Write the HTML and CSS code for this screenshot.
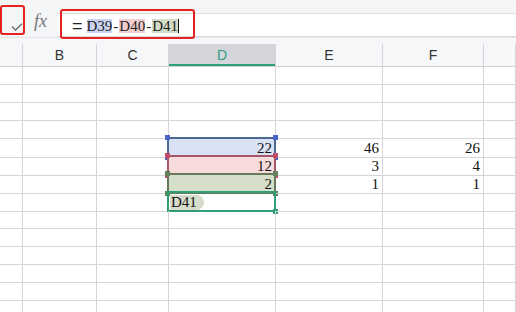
FILE: index.html
```html
<!DOCTYPE html>
<html lang="en">
<head>
    <meta charset="UTF-8">
    <title>Formula</title>
    <link rel="stylesheet" href="styles.css">
</head>
<body>
    <div class="sheet">
        <div class="toolbar">
            <div class="tools">
                <span class="confirm">
                    <svg width="12" height="8" viewBox="0 0 12 8"><polyline points="1,3.5 4.5,7 11,0.8" fill="none" stroke="#6b6b6b" stroke-width="1.3"/></svg>
                </span>
                <span class="fx">fx</span>
            </div>
            <div class="formula">
                <span class="eq">=</span><span class="tok t-blue">D39</span><span class="op">-</span><span class="tok t-pink">D40</span><span class="op">-</span><span class="tok t-green">D41</span><span class="caret"></span>
            </div>
            <div class="mark mark-check"></div>
            <div class="mark mark-formula"></div>
        </div>

        <div class="colhead">
            <div class="h"></div>
            <div class="h">B</div>
            <div class="h">C</div>
            <div class="h h-active">D</div>
            <div class="h">E</div>
            <div class="h">F</div>
            <div class="h"></div>
        </div>

        <div class="grid">
            <div class="row"><div class="c"></div><div class="c"></div><div class="c"></div><div class="c"></div><div class="c"></div><div class="c"></div><div class="c"></div></div>
            <div class="row"><div class="c"></div><div class="c"></div><div class="c"></div><div class="c"></div><div class="c"></div><div class="c"></div><div class="c"></div></div>
            <div class="row"><div class="c"></div><div class="c"></div><div class="c"></div><div class="c"></div><div class="c"></div><div class="c"></div><div class="c"></div></div>
            <div class="row"><div class="c"></div><div class="c"></div><div class="c"></div><div class="c"></div><div class="c"></div><div class="c"></div><div class="c"></div></div>
            <div class="row">
                <div class="c"></div><div class="c"></div><div class="c"></div>
                <div class="c num fill-blue">22<span class="rng rng-blue"><i class="dot tl"></i><i class="dot tr"></i><i class="dot bl"></i><i class="dot br"></i></span></div>
                <div class="c num">46</div><div class="c num">26</div><div class="c"></div>
            </div>
            <div class="row">
                <div class="c"></div><div class="c"></div><div class="c"></div>
                <div class="c num fill-pink">12<span class="rng rng-pink"><i class="dot tl"></i><i class="dot tr"></i><i class="dot bl"></i><i class="dot br"></i></span></div>
                <div class="c num">3</div><div class="c num">4</div><div class="c"></div>
            </div>
            <div class="row">
                <div class="c"></div><div class="c"></div><div class="c"></div>
                <div class="c num fill-green">2<span class="rng rng-green"><i class="dot tl"></i><i class="dot tr"></i><i class="dot bl"></i><i class="dot br"></i></span></div>
                <div class="c num">1</div><div class="c num">1</div><div class="c"></div>
            </div>
            <div class="row">
                <div class="c"></div><div class="c"></div><div class="c"></div>
                <div class="c editing"><span class="chip">D41</span><span class="rng rng-active"><i class="dot br"></i></span></div>
                <div class="c"></div><div class="c"></div><div class="c"></div>
            </div>
            <div class="row"><div class="c"></div><div class="c"></div><div class="c"></div><div class="c"></div><div class="c"></div><div class="c"></div><div class="c"></div></div>
            <div class="row"><div class="c"></div><div class="c"></div><div class="c"></div><div class="c"></div><div class="c"></div><div class="c"></div><div class="c"></div></div>
            <div class="row"><div class="c"></div><div class="c"></div><div class="c"></div><div class="c"></div><div class="c"></div><div class="c"></div><div class="c"></div></div>
            <div class="row"><div class="c"></div><div class="c"></div><div class="c"></div><div class="c"></div><div class="c"></div><div class="c"></div><div class="c"></div></div>
            <div class="row"><div class="c"></div><div class="c"></div><div class="c"></div><div class="c"></div><div class="c"></div><div class="c"></div><div class="c"></div></div>
            <div class="row"><div class="c"></div><div class="c"></div><div class="c"></div><div class="c"></div><div class="c"></div><div class="c"></div><div class="c"></div></div>
        </div>
    </div>
</body>
</html>
```

FILE: styles.css
```css
body {
    margin: 0;
    background-color: #fff;
    font-family: "Liberation Sans", Arial, sans-serif;
    overflow: hidden;
}
.sheet {
    width: 516px;
    height: 312px;
    overflow: hidden;
}

/* formula bar */
.toolbar {
    position: relative;
    display: flex;
    height: 37px;
    background-color: #f4f5f7;
}
.tools {
    width: 57px;
    display: flex;
    align-items: center;
    padding-top: 6px;
    box-sizing: border-box;
}
.confirm {
    width: 34px;
    display: flex;
    justify-content: center;
    padding-top: 10px;
}
.fx {
    font-family: "Liberation Serif", serif;
    font-style: italic;
    font-size: 18px;
    color: #777;
}
.formula {
    flex: 1;
    margin-top: 13px;
    height: 24px;
    background-color: #fff;
    border-top: 1px solid #dfe0e3;
    border-bottom: 1px solid #d9dade;
    box-sizing: border-box;
    display: flex;
    align-items: center;
    padding-left: 15px;
    padding-top: 2px;
    font-family: "Liberation Serif", serif;
    font-size: 15px;
    color: #222;
}
.eq {
    font-family: "Liberation Sans", sans-serif;
    font-size: 18px;
    line-height: 14px;
    margin-right: 4px;
}
.op { padding: 0 1px; }
.tok {
    display: inline-block;
    line-height: 14px;
}
.t-blue { background-color: #c9d3f0; }
.t-pink { background-color: #f2cdcf; }
.t-green { background-color: #d2dcc6; }
.caret {
    display: inline-block;
    width: 1px;
    height: 14px;
    background-color: #111;
}
.mark {
    position: absolute;
    border: 2.5px solid #e42222;
    border-radius: 3px;
    box-sizing: border-box;
}
.mark-check { left: 0; top: 5px; width: 25px; height: 30px; }
.mark-formula { left: 60px; top: 9px; width: 135px; height: 30px; }

/* column headers */
.colhead {
    display: grid;
    grid-template-columns: 23px 74px 72px 107px 107px 101px 1fr;
    height: 30px;
    background-color: #f6f7f9;
    border-top: 1px solid #e3e4e8;
    border-bottom: 1px solid #cfd0d6;
    box-sizing: border-box;
    align-items: end;
}
.h {
    height: 22px;
    border-right: 1px solid #d3d4d9;
    box-sizing: border-box;
    text-align: center;
    font-size: 14px;
    line-height: 22px;
    color: #333;
}
.h-active {
    background-color: #d4d6db;
    color: #2e9e78;
    box-shadow: inset 0 -2px 0 #2f9f79;
}

/* cells */
.row {
    display: grid;
    grid-template-columns: 23px 74px 72px 107px 107px 101px 1fr;
    height: 18px;
}
.c {
    position: relative;
    border-right: 1px solid #d4d4d9;
    border-bottom: 1px solid #d4d4d9;
    box-sizing: border-box;
    font-family: "Liberation Serif", serif;
    font-size: 15px;
    line-height: 18px;
    color: #111;
}
.num { text-align: right; padding-right: 3px; }
.fill-blue { background-color: #dae2f6; }
.fill-pink { background-color: #f7dbdd; }
.fill-green { background-color: #d6dfca; }

.rng {
    position: absolute;
    left: -2px;
    top: -2px;
    right: -1px;
    bottom: -1px;
    border: 2px solid;
}
.rng-blue { border-color: #4f6794; }
.rng-pink { border-color: #a65769; }
.rng-green { border-color: #68795a; }
.rng-active { border-color: #2f9f79; }
.dot {
    position: absolute;
    width: 5px;
    height: 5px;
}
.dot.tl { left: -4px; top: -4px; }
.dot.tr { right: -4px; top: -4px; }
.dot.bl { left: -4px; bottom: -4px; }
.dot.br { right: -4px; bottom: -4px; }
.rng-blue .dot { background-color: #4a64c6; }
.rng-pink .dot { background-color: #c24e69; }
.rng-green .dot { background-color: #62805a; }
.rng-active .dot { background-color: #2f9f79; }

.chip {
    display: inline-block;
    margin-left: 1px;
    padding: 0 7px 0 1px;
    height: 15px;
    line-height: 15px;
    border-radius: 0 8px 8px 0;
    background-color: #d5dcca;
}
```
